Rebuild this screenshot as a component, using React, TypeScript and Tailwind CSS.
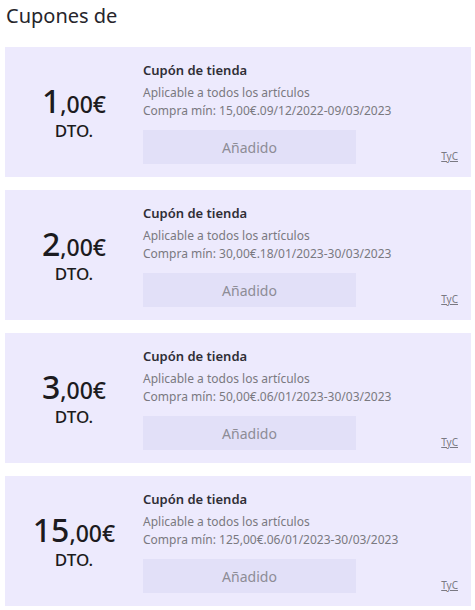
const coupons = [
  { whole: '1', min: '15,00€', from: '09/12/2022', to: '09/03/2023' },
  { whole: '2', min: '30,00€', from: '18/01/2023', to: '30/03/2023' },
  { whole: '3', min: '50,00€', from: '06/01/2023', to: '30/03/2023' },
  { whole: '15', min: '125,00€', from: '06/01/2023', to: '30/03/2023' },
];

function CouponCard({ whole, min, from, to }: (typeof coupons)[number]) {
  return (
    <div className="flex h-[130px] bg-[#edeafd]">
      <div className="flex w-[138px] flex-col items-center justify-center text-[#1c1b20]">
        <div className="flex items-baseline font-medium leading-none">
          <span className="text-[32px]">{whole}</span>
          <span className="text-[23px]">,00€</span>
        </div>
        <div className="mt-[5px] text-[17px] font-medium leading-none">DTO.</div>
      </div>
      <div className="flex flex-1 flex-col pt-[14px] pr-[13px]">
        <div className="text-[13px] font-semibold leading-[18px] text-[#2f2e36]">Cupón de tienda</div>
        <div className="mt-[5px] text-[12px] leading-[18px] text-[#7a7980]">
          <div>Aplicable a todos los artículos</div>
          <div>
            Compra mín: {min}.{from}-{to}
          </div>
        </div>
        <div className="mt-[10px] flex items-end justify-between">
          <button
            type="button"
            className="flex h-[34px] w-[213px] items-center justify-center bg-[#e2e0f8] text-[14px] text-[#8d8c96]"
          >
            Añadido
          </button>
          <a className="mb-[1px] text-[10px] leading-[14px] text-[#7a7983] underline">TyC</a>
        </div>
      </div>
    </div>
  );
}

export default function App() {
  return (
    <div className="min-h-[610px] bg-white pt-[2px] pr-[4px] pl-[5px] font-['Noto_Sans',sans-serif]">
      <h1 className="pl-[1px] text-[20px] leading-[28px] text-[#26252b]">Cupones de</h1>
      <div className="mt-[17px] flex flex-col gap-[13px]">
        {coupons.map((c) => (
          <CouponCard key={c.whole} {...c} />
        ))}
      </div>
    </div>
  );
}
